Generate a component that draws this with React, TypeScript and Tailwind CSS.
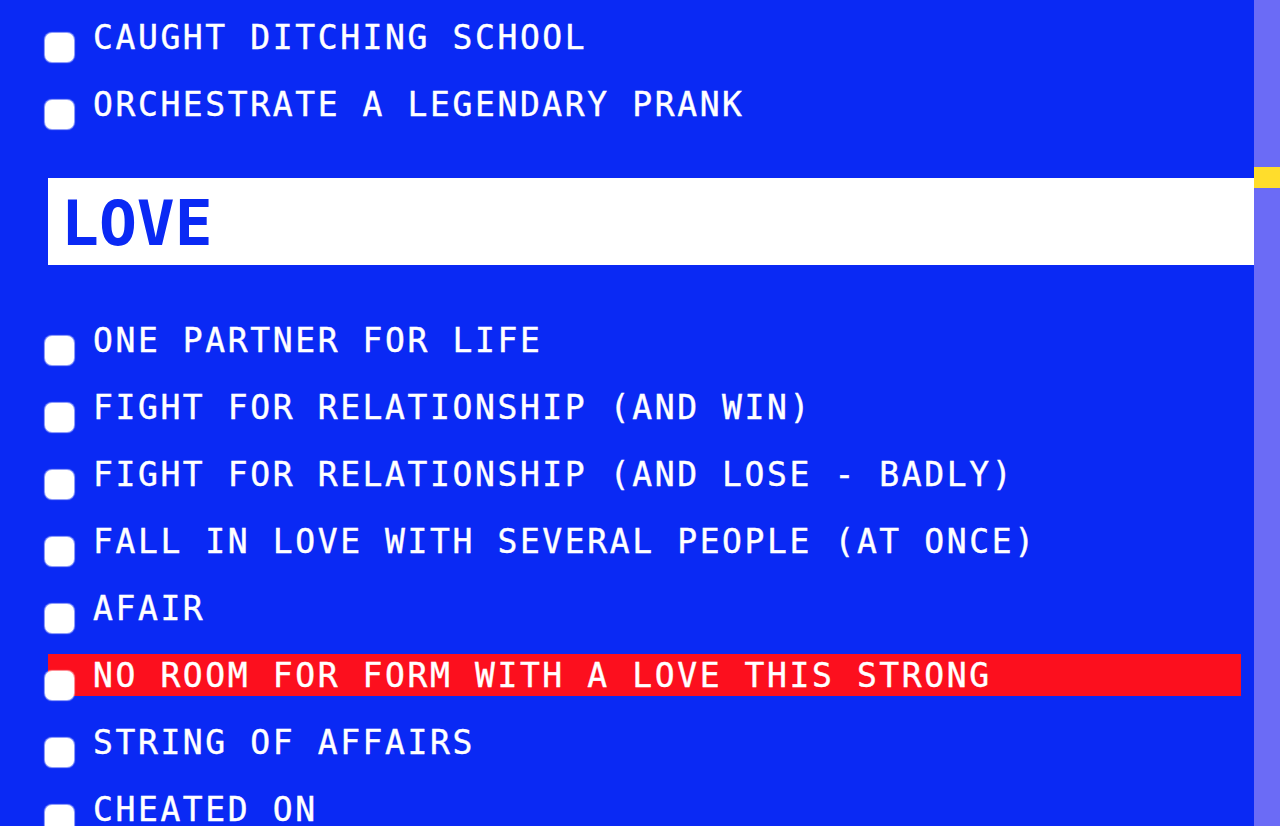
const school = ["CAUGHT DITCHING SCHOOL", "ORCHESTRATE A LEGENDARY PRANK"];

const love = [
  "ONE PARTNER FOR LIFE",
  "FIGHT FOR RELATIONSHIP (AND WIN)",
  "FIGHT FOR RELATIONSHIP (AND LOSE - BADLY)",
  "FALL IN LOVE WITH SEVERAL PEOPLE (AT ONCE)",
  "AFAIR",
  "NO ROOM FOR FORM WITH A LOVE THIS STRONG",
  "STRING OF AFFAIRS",
  "CHEATED ON",
];

const font = { fontFamily: '"DejaVu Sans Mono", "Liberation Mono", monospace' };

function Item({ label, hot }: { label: string; hot?: boolean }) {
  return (
    <label className="flex h-[67px] items-center">
      <div
        className={`ml-[48px] mr-[13px] flex h-[42px] flex-1 items-center ${hot ? "bg-[#fc0f1e]" : ""}`}
      >
        <span className="-ml-[3px] mt-[21px] h-[29px] w-[29px] shrink-0 rounded-[7px] bg-white shadow-[0_0_1px_1px_rgba(255,255,255,0.6)]" />
        <span className="ml-[19px] pt-[2px] whitespace-nowrap text-[33px] leading-none tracking-[2.6px] text-white [-webkit-text-stroke:0.4px_white]">
          {label}
        </span>
      </div>
    </label>
  );
}

export default function App() {
  return (
    <div className="flex h-[826px] w-[1280px] overflow-hidden bg-[#0a29f4]" style={font}>
      <main className="flex-1 pt-[3px]">
        {school.map((s) => (
          <Item key={s} label={s} />
        ))}
        <h2 className="my-[41px] ml-[48px] flex h-[87px] items-center bg-white pl-[13px] pt-[3px] text-[63px] font-bold leading-none tracking-[0px] text-[#0a29f4]">
          LOVE
        </h2>
        {love.map((s, i) => (
          <Item key={s} label={s} hot={i === 5} />
        ))}
      </main>
      <div className="w-[26px] shrink-0 bg-[#6b6bf6]">
        <div className="mt-[167px] h-[21px] bg-[#ffdd2c]" />
      </div>
    </div>
  );
}
